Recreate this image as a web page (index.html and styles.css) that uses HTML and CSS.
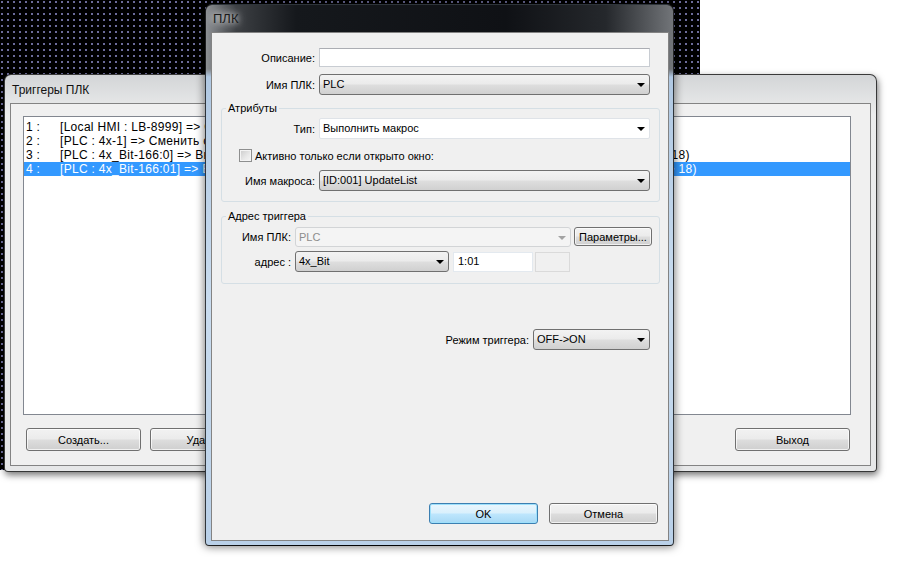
FILE: index.html
```html
<!DOCTYPE html>
<html lang="ru">
<head>
    <meta charset="UTF-8">
    <title>ПЛК</title>
    <link rel="stylesheet" href="styles.css">
</head>
<body>
    <div class="desktop">
        <div class="canvas_area"></div>

        <!-- back window -->
        <div class="window back_window">
            <div class="title_bar back_title">Триггеры ПЛК</div>
            <div class="client back_client">
                <div class="list_box">
                    <div class="list_row"><span class="row_num">1 :</span><span>[Local HMI : LB-8999] =&gt; Сменить окно (10)</span></div>
                    <div class="list_row"><span class="row_num">2 :</span><span>[PLC : 4x-1] =&gt; Сменить окно (12)</span></div>
                    <div class="list_row"><span class="row_num">3 :</span><span>[PLC : 4x_Bit-166:0] =&gt; Выполнить макрос [ID:001] UpdateList ( ), только если открыто окно (окно: #10 -&gt; 18)</span></div>
                    <div class="list_row selected"><span class="row_num">4 :</span><span>[PLC : 4x_Bit-166:01] =&gt; Выполнить макрос [ID:001] UpdateList ( ), только если открыто окно (окно: #10 -&gt; 18)</span></div>
                </div>
                <div class="back_buttons">
                    <button type="button" class="btn btn_back">Создать...</button>
                    <button type="button" class="btn btn_back">Удалить</button>
                    <button type="button" class="btn btn_back">Настройки...</button>
                    <button type="button" class="btn btn_back btn_exit">Выход</button>
                </div>
            </div>
        </div>

        <!-- front window -->
        <div class="window front_window">
            <div class="title_bar front_title"><span class="title_text">ПЛК</span></div>
            <div class="client front_client">
                <div class="row">
                    <span class="lbl lbl_main">Описание:</span>
                    <div class="text_box box_main"></div>
                </div>
                <div class="row row_plc">
                    <span class="lbl lbl_main">Имя ПЛК:</span>
                    <div class="combo box_main">PLC</div>
                </div>

                <fieldset class="group group_attr">
                    <legend>Атрибуты</legend>
                    <div class="row">
                        <span class="lbl lbl_group">Тип:</span>
                        <div class="combo combo_white box_main">Выполнить макрос</div>
                    </div>
                    <div class="row row_check">
                        <span class="check_box"></span>
                        <span class="check_text">Активно только если открыто окно:</span>
                    </div>
                    <div class="row row_macro">
                        <span class="lbl lbl_group">Имя макроса:</span>
                        <div class="combo box_main">[ID:001] UpdateList</div>
                    </div>
                </fieldset>

                <fieldset class="group group_addr">
                    <legend>Адрес триггера</legend>
                    <div class="row">
                        <span class="lbl lbl_addr">Имя ПЛК:</span>
                        <div class="combo combo_disabled box_plc">PLC</div>
                        <button type="button" class="btn btn_params">Параметры...</button>
                    </div>
                    <div class="row row_address">
                        <span class="lbl lbl_addr">адрес :</span>
                        <div class="combo box_device">4x_Bit</div>
                        <div class="text_box box_addr">1:01</div>
                        <div class="text_box box_empty"></div>
                    </div>
                </fieldset>

                <div class="row row_mode">
                    <span class="lbl">Режим триггера:</span>
                    <div class="combo box_mode">OFF-&gt;ON</div>
                </div>

                <div class="row dialog_buttons">
                    <button type="button" class="btn btn_dialog btn_default">OK</button>
                    <button type="button" class="btn btn_dialog">Отмена</button>
                </div>
            </div>
        </div>
    </div>
</body>
</html>
```

FILE: styles.css
```css
/* General */
*{
    box-sizing: border-box;
}
html, body{
    margin: 0px;
    padding: 0px;
}
body{
    width: 898px;
    height: 562px;
    overflow: hidden;
    background-color: white;
    font-family: "Liberation Sans", Arial, sans-serif;
    font-size: 11px;
    color: #000;
}
.desktop{
    position: relative;
    width: 898px;
    height: 562px;
}
.canvas_area{
    position: absolute;
    left: 0px;
    top: 0px;
    width: 700px;
    height: 470px;
    background-color: #000;
    background-image: radial-gradient(circle at 2px 2px, #a8a8f0 0.6px, transparent 0.9px);
    background-size: 6px 6px;
}

/* Windows */
.window{
    position: absolute;
    display: flex;
    flex-direction: column;
    border: 1px solid rgba(0, 0, 0, 0.75);
    border-radius: 7px 7px 4px 4px;
}
.title_bar{
    display: flex;
    align-items: center;
    font-size: 12px;
    color: #111;
}
.client{
    display: flex;
    flex-direction: column;
    background-color: #f0f0f0;
    border: 1px solid #838383;
}

/* Back window */
.back_window{
    left: 4px;
    top: 74px;
    width: 873px;
    height: 398px;
    padding: 0px 5px 5px 5px;
    background: linear-gradient(to bottom, #d3d5d7 0px, #eceded 40px, #e6e7e8 100%);
    box-shadow: 1px 3px 7px rgba(0, 0, 0, 0.55);
}
.back_title{
    height: 28px;
    padding-left: 2px;
    padding-top: 1px;
}
.back_client{
    height: 363px;
    padding: 12px 12px 0px 12px;
}
.list_box{
    width: 828px;
    height: 299px;
    background-color: white;
    border: 1px solid #828790;
    padding-top: 3px;
    overflow: hidden;
    font-size: 12px;
    letter-spacing: 0.3px;
}
.list_row{
    display: flex;
    height: 14px;
    line-height: 14px;
    padding-left: 2px;
    white-space: nowrap;
}
.list_row.selected{
    background-color: #3399ff;
    color: white;
}
.row_num{
    width: 34px;
    flex-shrink: 0;
}
.back_buttons{
    display: flex;
    gap: 9px;
    width: 828px;
    margin-top: 13px;
    padding-left: 3px;
    padding-right: 1px;
}
.btn_back{
    width: 115px;
    height: 23px;
    font-size: 12px;
}
.btn_exit{
    margin-left: auto;
}

/* Front window */
.front_window{
    left: 205px;
    top: 4px;
    width: 469px;
    height: 542px;
    padding: 0px 4px 4px 5px;
    background:
        linear-gradient(to bottom, rgba(0, 0, 0, 0) 0px, rgba(0, 0, 0, 0) 64px, #b0c8e2 72px, #c9dcef 300px, #b9d0e8 100%),
        linear-gradient(to right, #8d9094 0px, #3d4044 30px, #15181c 90px, #0f1115 300px, #25282c 400px, #74777b 469px);
    box-shadow: 0px 0px 8px 1px rgba(0, 0, 0, 0.5);
}
.front_title{
    height: 27px;
    padding-left: 2px;
}
.title_text{
    font-size: 13px;
    text-shadow: 0px 0px 6px rgba(255, 255, 255, 0.9), 0px 0px 10px rgba(255, 255, 255, 0.8);
    color: #1a1a1a;
}
.front_client{
    width: 458px;
    height: 509px;
    padding-top: 15px;
}

/* Rows */
.row{
    display: flex;
    align-items: center;
    gap: 4px;
}
.lbl{
    text-align: right;
    white-space: nowrap;
}
.lbl_main{
    width: 103px;
}
.lbl_group{
    width: 93px;
}
.lbl_addr{
    width: 69px;
}
.row_plc{
    margin-top: 7px;
}
.box_main{
    width: 331px;
}

/* Inputs */
.text_box{
    height: 19px;
    line-height: 17px;
    padding-left: 4px;
    background-color: white;
    border: 1px solid #c8ccd2;
    border-top-color: #abadb3;
}
.combo{
    position: relative;
    height: 21px;
    line-height: 19px;
    padding-left: 3px;
    border: 1px solid #707070;
    border-radius: 3px;
    background: linear-gradient(to bottom, #f3f3f3 0%, #ebebeb 48%, #dedede 52%, #d0d0d0 100%);
    white-space: nowrap;
}
.combo::after{
    content: "";
    position: absolute;
    right: 4px;
    top: 8px;
    border-left: 4px solid transparent;
    border-right: 4px solid transparent;
    border-top: 4px solid #000;
}
.combo_white{
    background: white;
    border-color: #dfe3e8;
    border-radius: 2px;
}
.combo_disabled{
    background: #f4f4f4;
    border-color: #d2d4d6;
    color: #8d8d8d;
    height: 20px;
    line-height: 18px;
}
.combo_disabled::after{
    border-top-color: #a3a3a3;
}

/* Groups */
.group{
    margin: 6px 0px 0px 9px;
    width: 439px;
    border: 1px solid #d5dfe5;
    border-radius: 3px;
    padding: 3px 0px 10px 0px;
}
.group legend{
    margin-left: 4px;
    padding: 0px 2px;
    height: 14px;
    line-height: 14px;
    font-size: 11px;
}
.row_check{
    margin-top: 10px;
    gap: 3px;
}
.check_box{
    width: 13px;
    height: 13px;
    margin-left: 17px;
    border: 1px solid #8e8f8f;
    background: linear-gradient(135deg, #cbcbcb 0%, #e9e9e9 60%, #f6f6f6 100%);
    box-shadow: inset 0px 0px 0px 1px #f4f4f4;
}
.row_macro{
    margin-top: 8px;
}
.group_addr{
    margin-top: 7px;
    padding: 4px 0px 11px 0px;
}
.box_plc{
    width: 276px;
}
.btn_params{
    width: 78px;
    height: 19px;
    margin-left: -1px;
    align-self: flex-start;
    padding: 0px;
}
.row_address{
    margin-top: 4px;
}
.box_device{
    width: 154px;
}
.box_addr{
    width: 80px;
    height: 20px;
    border-color: #e3e9ef;
}
.box_empty{
    width: 35px;
    height: 20px;
    margin-left: -2px;
    background-color: #f0f0f0;
    border-color: #dadada;
}
.row_mode{
    margin-top: 45px;
    justify-content: flex-end;
    padding-right: 18px;
}
.box_mode{
    width: 117px;
}

/* Buttons */
.btn{
    font-family: "Liberation Sans", Arial, sans-serif;
    font-size: 11px;
    color: #000;
    border: 1px solid #707070;
    border-radius: 3px;
    background: linear-gradient(to bottom, #f2f2f2 0%, #ebebeb 48%, #dddddd 52%, #cfcfcf 100%);
    box-shadow: inset 0px 0px 0px 1px rgba(255, 255, 255, 0.7);
    padding: 0px;
}
.dialog_buttons{
    margin-top: auto;
    padding-bottom: 16px;
    padding-right: 10px;
    justify-content: flex-end;
    gap: 11px;
}
.btn_dialog{
    width: 109px;
    height: 21px;
}
.btn_default{
    border-color: #3c7fb1;
    background: linear-gradient(to bottom, #eaf6fd 0%, #d9f0fc 48%, #bee6fd 52%, #a7d9f5 100%);
    box-shadow: inset 0px 0px 0px 1px #9ee0fb;
}
```
